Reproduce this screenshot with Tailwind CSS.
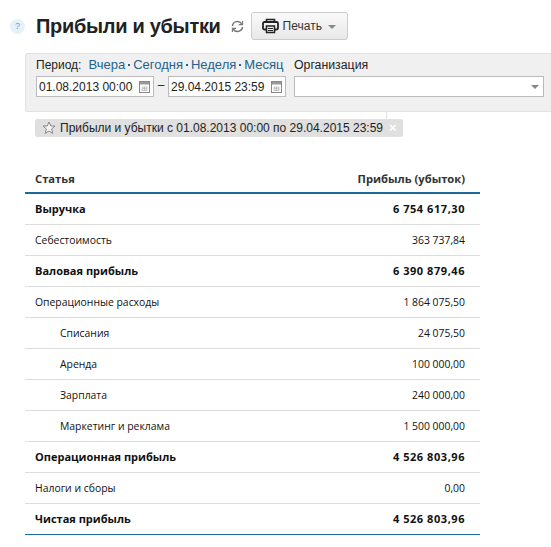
<!DOCTYPE html>
<html lang="ru">
<head>
<meta charset="UTF-8">
<title>Прибыли и убытки</title>
<script src="https://cdn.jsdelivr.net/npm/@tailwindcss/browser@4"></script>
</head>
<body class="bg-white w-[551px] h-[547px] overflow-hidden font-['Liberation_Sans',sans-serif] text-[#222]">

<!-- Заголовок -->
<div class="flex items-center h-[53px] pl-[10px] pb-[1px]">
  <div class="w-[15px] h-[15px] rounded-full bg-[#e6f1fa] text-[#6d9cc4] text-[9px] leading-[15px] text-center">?</div>
  <h1 class="ml-[11px] text-[20px] tracking-[-0.3px] leading-[26px] font-bold text-[#222]">Прибыли и убытки</h1>
  <svg class="ml-[10px] w-[13px] h-[13px] mt-[1px]" viewBox="0 0 14 14" fill="none" stroke="#777" stroke-width="1.6">
    <path d="M1.5 6.5A5.5 5.5 0 0 1 11.5 4"/><path d="M12.5 7.5A5.5 5.5 0 0 1 2.5 10"/>
    <path d="M12.5 1v4h-4" stroke-width="1.2"/><path d="M1.5 13V9h4" stroke-width="1.2"/>
  </svg>
  <button class="ml-[7px] w-[97px] h-[28px] flex items-center pl-[10px] border border-[#ccc] rounded-[3px] bg-gradient-to-b from-[#fafafa] to-[#e8e8e8] text-[12px] text-[#333]">
    <svg class="w-[17px] h-[16px]" viewBox="0 0 17 16" fill="none" stroke="#222">
      <path d="M4.5 4V1.5h8V4" stroke-width="1.6"/>
      <path d="M4 11.5H2.5a1.5 1.5 0 0 1-1.5-1.5V5.500A1.500 1.500 0 0 1 2.500 4h12A1.500 1.500 0 0 1 16 5.500V10a1.500 1.500 0 0 1-1.500 1.500H13" stroke-width="1.8"/>
      <path d="M4.500 8h8v6.500h-8z" stroke-width="1.500"/>
      <path d="M6 10.500h5M6 12.500h5" stroke-width="1"/>
    </svg>
    <span class="ml-[4px]">Печать</span>
    <span class="ml-[6px] mt-[2px] w-0 h-0 border-x-[4px] border-x-transparent border-t-[4px] border-t-[#888]"></span>
  </button>
</div>

<!-- Фильтр -->
<div class="ml-[25px] h-[59px] bg-[#f0f0f0] border border-r-0 border-[#e2e2e2] rounded-l-[3px] flex pl-[10px] pt-[3px] text-[12px] text-[#222]">
  <div class="w-[250px]">
    <div class="flex h-[16px] leading-[16px] whitespace-nowrap">
      <span>Период:</span>
      <span class="ml-[7px] text-[13px] text-[#23628f] flex items-center">Вчера<i class="mx-[3px] w-[2px] h-[2px] bg-[#23628f]"></i>Сегодня<i class="mx-[3px] w-[2px] h-[2px] bg-[#23628f]"></i>Неделя<i class="mx-[3px] w-[2px] h-[2px] bg-[#23628f]"></i>Месяц</span>
    </div>
    <div class="flex items-center mt-[3px]">
      <div class="w-[118px] h-[21px] shrink-0 bg-white border border-[#bbb] flex items-center justify-between pl-[2px] pr-[3px]">
        <span>01.08.2013 00:00</span>
        <svg class="w-[11px] h-[12px]" viewBox="0 0 11 12" fill="none"><rect x=".5" y=".5" width="10" height="11" fill="#fff" stroke="#888"/><rect x="1" y="1" width="9" height="2.5" fill="#999"/><path d="M3 6h5v3.5H3zM5.500 6v3.500M3 7.700h5" stroke="#aaa" stroke-width=".7"/></svg>
      </div>
      <span class="w-[14px] shrink-0 text-center -mt-[3px]">–</span>
      <div class="w-[118px] h-[21px] shrink-0 bg-white border border-[#bbb] flex items-center justify-between pl-[2px] pr-[3px]">
        <span>29.04.2015 23:59</span>
        <svg class="w-[11px] h-[12px]" viewBox="0 0 11 12" fill="none"><rect x=".5" y=".5" width="10" height="11" fill="#fff" stroke="#888"/><rect x="1" y="1" width="9" height="2.5" fill="#999"/><path d="M3 6h5v3.5H3zM5.500 6v3.500M3 7.700h5" stroke="#aaa" stroke-width=".7"/></svg>
      </div>
    </div>
  </div>
  <div class="ml-[8px]">
    <div class="h-[16px] leading-[16px] text-[12.3px]">Организация</div>
    <div class="mt-[3px] w-[250px] h-[21px] bg-white border border-[#bbb] flex items-center justify-end pr-[4px]">
      <span class="w-0 h-0 border-x-[4px] border-x-transparent border-t-[4px] border-t-[#888]"></span>
    </div>
  </div>
</div>

<!-- Сохранённый отчёт -->
<div class="relative ml-[35px] mt-[7px] w-[368px] h-[18px] bg-[#e0e0e0] rounded-[3px] flex items-center pl-[7px] text-[12px] text-[#222] whitespace-nowrap">
  <div class="absolute left-[351px] -top-[7px] w-px h-[7px] bg-[#e2e2e2]"></div>
  <svg class="w-[14px] h-[14px] shrink-0" viewBox="0 0 14 14" fill="#f4f4f4" stroke="#888"><path d="M7 1l1.800 4h4.200l-3.300 2.900 1.100 4.500L7 10l-3.800 2.400 1.100-4.500L1 5h4.200z"/></svg>
  <span class="ml-[4px]">Прибыли и убытки с 01.08.2013 00:00 по 29.04.2015 23:59</span>
  <span class="ml-[6px] text-white font-bold text-[13px] leading-[18px]">×</span>
</div>

<!-- Таблица -->
<div class="ml-[25px] mt-[22px] w-[455px] font-['Open_Sans',sans-serif] text-[10.4px] text-[#111]">
  <div class="flex justify-between items-center h-[35px] pt-[8px] pl-[10px] pr-[15px] border-b-[2px] border-[#1d6a99] font-bold text-[11.2px] text-[#333]">
    <span>Статья</span><span>Прибыль (убыток)</span>
  </div>
  <div class="flex justify-between items-center h-[31px] pl-[10px] pr-[15px] border-b border-[#ddd] font-bold text-[11px]"><span>Выручка</span><span class="tracking-[0.55px]">6 754 617,30</span></div>
  <div class="flex justify-between items-center h-[31px] pt-[2px] pl-[10px] pr-[15px] border-b border-[#ddd]"><span>Себестоимость</span><span>363 737,84</span></div>
  <div class="flex justify-between items-center h-[31px] pl-[10px] pr-[15px] border-b border-[#ddd] font-bold text-[11px]"><span>Валовая прибыль</span><span class="tracking-[0.55px]">6 390 879,46</span></div>
  <div class="flex justify-between items-center h-[31px] pt-[2px] pl-[10px] pr-[15px] border-b border-[#ddd]"><span>Операционные расходы</span><span>1 864 075,50</span></div>
  <div class="flex justify-between items-center h-[31px] pt-[2px] pl-[35px] pr-[15px] border-b border-[#ddd]"><span>Списания</span><span>24 075,50</span></div>
  <div class="flex justify-between items-center h-[31px] pt-[2px] pl-[35px] pr-[15px] border-b border-[#ddd]"><span>Аренда</span><span>100 000,00</span></div>
  <div class="flex justify-between items-center h-[31px] pt-[2px] pl-[35px] pr-[15px] border-b border-[#ddd]"><span>Зарплата</span><span>240 000,00</span></div>
  <div class="flex justify-between items-center h-[31px] pt-[2px] pl-[35px] pr-[15px] border-b border-[#ddd]"><span>Маркетинг и реклама</span><span>1 500 000,00</span></div>
  <div class="flex justify-between items-center h-[31px] pl-[10px] pr-[15px] border-b border-[#ddd] font-bold text-[11px]"><span>Операционная прибыль</span><span class="tracking-[0.55px]">4 526 803,96</span></div>
  <div class="flex justify-between items-center h-[31px] pt-[2px] pl-[10px] pr-[15px] border-b border-[#ddd]"><span>Налоги и сборы</span><span>0,00</span></div>
  <div class="flex justify-between items-center h-[31px] pl-[10px] pr-[15px] border-b border-[#1d6a99] font-bold text-[11px]"><span>Чистая прибыль</span><span class="tracking-[0.55px]">4 526 803,96</span></div>
</div>

</body>
</html>
